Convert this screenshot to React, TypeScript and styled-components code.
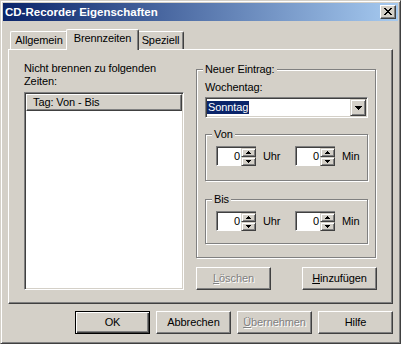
import React from "react";
import styled, { createGlobalStyle, css } from "styled-components";

const FACE = "#D4D0C8";
const LIGHT = "#FFFFFF";
const SHADOW = "#808080";
const DARK = "#404040";

const Global = createGlobalStyle`
  html, body { margin: 0; padding: 0; background: ${FACE}; }
  body {
    font-family: "Liberation Sans", Arial, sans-serif;
    font-size: 11px;
    line-height: 13px;
    letter-spacing: -0.1px;
    color: #000;
  }
  * { box-sizing: border-box; }
`;

const Window = styled.div`
  width: 401px;
  height: 344px;
  background: ${FACE};
  border: 1px solid;
  border-color: ${FACE} ${DARK} ${DARK} ${FACE};
  box-shadow: inset 1px 1px 0 ${LIGHT}, inset -1px -1px 0 ${SHADOW};
  padding: 2px;
  display: flex;
  flex-direction: column;
`;

const TitleBar = styled.div`
  height: 18px;
  display: flex;
  align-items: center;
  padding: 0 2px 0 2px;
  background: linear-gradient(to right, #0a246a, #a6caf0);
`;

const TitleText = styled.div`
  flex: 1;
  color: #fff;
  font-weight: bold;
  font-size: 11.5px;
  letter-spacing: 0;
  line-height: 14px;
  white-space: nowrap;
`;

const CaptionButton = styled.div`
  width: 16px;
  height: 14px;
  background: ${FACE};
  border: 1px solid;
  border-color: ${LIGHT} ${DARK} ${DARK} ${LIGHT};
  box-shadow: inset -1px -1px 0 ${SHADOW};
  display: flex;
  align-items: center;
  justify-content: center;
  padding: 0 1px 1px 0;
`;

const Client = styled.div`
  flex: 1;
  display: flex;
  flex-direction: column;
  padding: 0 5px;
`;

const TabStrip = styled.div`
  margin-top: 8px;
  height: 20px;
  display: flex;
  align-items: flex-end;
  padding-left: 2px;
  position: relative;
  z-index: 1;
`;

const Tab = styled.div<{ $active?: boolean; $w: number }>`
  width: ${(p) => p.$w}px;
  flex-shrink: 0;
  height: 18px;
  background: ${FACE};
  border-top: 1px solid ${LIGHT};
  border-left: 1px solid ${LIGHT};
  border-right: 1px solid ${DARK};
  box-shadow: inset -1px 0 0 ${SHADOW};
  border-radius: 2px 2px 0 0;
  text-align: center;
  padding-top: 2px;
  white-space: nowrap;
  ${(p) =>
    p.$active &&
    css`
      height: 21px;
      margin: 0 -2px -1px -2px;
      position: relative;
      z-index: 2;
      padding-top: 2px;
    `}
`;

const Panel = styled.div`
  width: 385px;
  height: 255px;
  border: 1px solid;
  border-color: ${LIGHT} ${DARK} ${DARK} ${LIGHT};
  box-shadow: inset -1px -1px 0 ${SHADOW};
  display: flex;
  padding: 12px 0 0 15px;
`;

const LeftColumn = styled.div`
  width: 160px;
  flex-shrink: 0;
  display: flex;
  flex-direction: column;
`;

const Text = styled.div`
  white-space: nowrap;
`;

const ListBox = styled.div`
  margin-top: 4px;
  height: 198px;
  background: #fff;
  border: 1px solid;
  border-color: ${SHADOW} ${LIGHT} ${LIGHT} ${SHADOW};
  box-shadow: inset 1px 1px 0 ${DARK}, inset -1px -1px 0 ${FACE};
  padding: 1px;
`;

const ListHeader = styled.div`
  height: 17px;
  background: ${FACE};
  border: 1px solid;
  border-color: ${LIGHT} ${DARK} ${DARK} ${LIGHT};
  box-shadow: inset -1px -1px 0 ${SHADOW};
  padding: 1px 0 0 6px;
  white-space: nowrap;
`;

const RightColumn = styled.div`
  width: 181px;
  flex-shrink: 0;
  margin-left: 12px;
  display: flex;
  flex-direction: column;
`;

const Group = styled.fieldset<{ $w: number; $pad: string; $legendShift: number; $top: number }>`
  margin: ${(p) => p.$top}px 0 0 0;
  min-width: 0;
  width: ${(p) => p.$w}px;
  flex-shrink: 0;
  border: 1px solid ${SHADOW};
  box-shadow: 1px 1px 0 ${LIGHT}, inset 1px 1px 0 ${LIGHT};
  padding: ${(p) => p.$pad};
  display: flex;
  flex-direction: column;

  & > legend {
    padding: 0 2px;
    margin-left: ${(p) => p.$legendShift}px;
    background: ${FACE};
    line-height: 13px;
    white-space: nowrap;
  }
`;

const Sunken = css`
  background: #fff;
  border: 1px solid;
  border-color: ${SHADOW} ${LIGHT} ${LIGHT} ${SHADOW};
  box-shadow: inset 1px 1px 0 ${DARK}, inset -1px -1px 0 ${FACE};
  padding: 1px;
`;

const Combo = styled.div`
  ${Sunken};
  margin-top: 3px;
  width: 163px;
  height: 21px;
  display: flex;
  align-items: center;
`;

const ComboValue = styled.div`
  flex: 1;
  display: flex;
  align-items: center;
`;

const Selected = styled.span`
  background: #0a246a;
  color: #fff;
  padding: 0 1px;
  line-height: 13px;
`;

const DropButton = styled.div`
  width: 16px;
  height: 17px;
  background: ${FACE};
  border: 1px solid;
  border-color: ${FACE} ${DARK} ${DARK} ${FACE};
  box-shadow: inset 1px 1px 0 ${LIGHT}, inset -1px -1px 0 ${SHADOW};
  display: flex;
  align-items: center;
  justify-content: center;
`;

const SpinRow = styled.div`
  display: flex;
  align-items: center;
`;

const SpinGroup = styled.div`
  width: 79px;
  flex-shrink: 0;
  display: flex;
  align-items: center;
`;

const SpinBox = styled.div`
  background: #fff;
  border: 1px solid;
  border-right: 0;
  border-color: ${SHADOW} ${LIGHT} ${LIGHT} ${SHADOW};
  box-shadow: inset 1px 1px 0 ${DARK};
  padding: 1px 0 0 1px;
  width: 40px;
  height: 20px;
  flex-shrink: 0;
  display: flex;
`;

const SpinValue = styled.div`
  flex: 1;
  text-align: right;
  padding-right: 1px;
  line-height: 17px;
`;

const UpDown = styled.div`
  width: 15px;
  height: 18px;
  display: flex;
  flex-direction: column;
`;

const Arrow = styled.div`
  flex: 1;
  background: ${FACE};
  border: 1px solid;
  border-color: ${FACE} ${DARK} ${DARK} ${FACE};
  box-shadow: inset 1px 1px 0 ${LIGHT}, inset -1px -1px 0 ${SHADOW};
  display: flex;
  align-items: center;
  justify-content: center;
`;

const Unit = styled.span`
  margin-left: 7px;
`;

const ButtonRow = styled.div<{ $top: number }>`
  margin-top: ${(p) => p.$top}px;
  display: flex;
  justify-content: space-between;
`;

const DialogButtons = styled.div`
  margin-top: 7px;
  display: flex;
  justify-content: flex-end;
  gap: 6px;
`;

const Button = styled.div<{ $default?: boolean; $disabled?: boolean }>`
  width: 75px;
  height: 23px;
  flex-shrink: 0;
  background: ${FACE};
  border: 1px solid;
  border-color: ${LIGHT} ${DARK} ${DARK} ${LIGHT};
  box-shadow: inset -1px -1px 0 ${SHADOW};
  display: flex;
  align-items: center;
  justify-content: center;
  white-space: nowrap;
  ${(p) =>
    p.$default &&
    css`
      border-color: #000;
      box-shadow: inset 1px 1px 0 ${LIGHT}, inset -1px -1px 0 ${DARK},
        inset -2px -2px 0 ${SHADOW};
    `}
  ${(p) =>
    p.$disabled &&
    css`
      color: ${SHADOW};
      text-shadow: 1px 1px 0 ${LIGHT};
    `}
`;

const CloseGlyph = () => (
  <svg width="8" height="7" viewBox="0 0 8 7" shapeRendering="crispEdges">
    <path
      d="M0 0h2v1h-2z M6 0h2v1h-2z M1 1h2v1h-2z M5 1h2v1h-2z M2 2h4v1h-4z M3 3h2v1h-2z M2 4h4v1h-4z M1 5h2v1h-2z M5 5h2v1h-2z M0 6h2v1h-2z M6 6h2v1h-2z"
      fill="#000"
    />
  </svg>
);

const DownTriangle = ({ w, h }: { w: number; h: number }) => (
  <svg width={w} height={h} viewBox={`0 0 ${w} ${h}`} shapeRendering="crispEdges">
    <polygon points={`0,0 ${w},0 ${w / 2},${h}`} fill="#000" />
  </svg>
);

const UpTriangle = ({ w, h }: { w: number; h: number }) => (
  <svg width={w} height={h} viewBox={`0 0 ${w} ${h}`} shapeRendering="crispEdges">
    <polygon points={`${w / 2},0 ${w},${h} 0,${h}`} fill="#000" />
  </svg>
);

const Spinner = ({ unit }: { unit: string }) => (
  <SpinGroup>
    <SpinBox>
      <SpinValue>0</SpinValue>
      <UpDown>
        <Arrow>
          <UpTriangle w={5} h={3} />
        </Arrow>
        <Arrow>
          <DownTriangle w={5} h={3} />
        </Arrow>
      </UpDown>
    </SpinBox>
    <Unit>{unit}</Unit>
  </SpinGroup>
);

export default function App() {
  return (
    <>
      <Global />
      <Window>
        <TitleBar>
          <TitleText>CD-Recorder Eigenschaften</TitleText>
          <CaptionButton>
            <CloseGlyph />
          </CaptionButton>
        </TitleBar>
        <Client>
          <TabStrip>
            <Tab $w={58}>Allgemein</Tab>
            <Tab $w={73} $active>
              Brennzeiten
            </Tab>
            <Tab $w={47}>Speziell</Tab>
          </TabStrip>
          <Panel>
            <LeftColumn>
              <Text>Nicht brennen zu folgenden</Text>
              <Text>Zeiten:</Text>
              <ListBox>
                <ListHeader>Tag: Von - Bis</ListHeader>
              </ListBox>
            </LeftColumn>
            <RightColumn>
              <Group $w={180} $pad="5px 7px 13px 8px" $legendShift={-2} $top={1}>
                <legend>Neuer Eintrag:</legend>
                <Text>Wochentag:</Text>
                <Combo>
                  <ComboValue>
                    <Selected>Sonntag</Selected>
                  </ComboValue>
                  <DropButton>
                    <DownTriangle w={7} h={4} />
                  </DropButton>
                </Combo>
                <Group $w={163} $pad="5px 0 14px 10px" $legendShift={-4} $top={10}>
                  <legend>Von</legend>
                  <SpinRow>
                    <Spinner unit="Uhr" />
                    <Spinner unit="Min" />
                  </SpinRow>
                </Group>
                <Group $w={163} $pad="5px 0 12px 10px" $legendShift={-4} $top={12}>
                  <legend>Bis</legend>
                  <SpinRow>
                    <Spinner unit="Uhr" />
                    <Spinner unit="Min" />
                  </SpinRow>
                </Group>
              </Group>
              <ButtonRow $top={9}>
                <Button $disabled>
                  <span>
                    <u>L</u>öschen
                  </span>
                </Button>
                <Button>
                  <span>
                    <u>H</u>inzufügen
                  </span>
                </Button>
              </ButtonRow>
            </RightColumn>
          </Panel>
          <DialogButtons>
            <Button $default>OK</Button>
            <Button>Abbrechen</Button>
            <Button $disabled>
              <span>
                <u>Ü</u>bernehmen
              </span>
            </Button>
            <Button>Hilfe</Button>
          </DialogButtons>
        </Client>
      </Window>
    </>
  );
}
